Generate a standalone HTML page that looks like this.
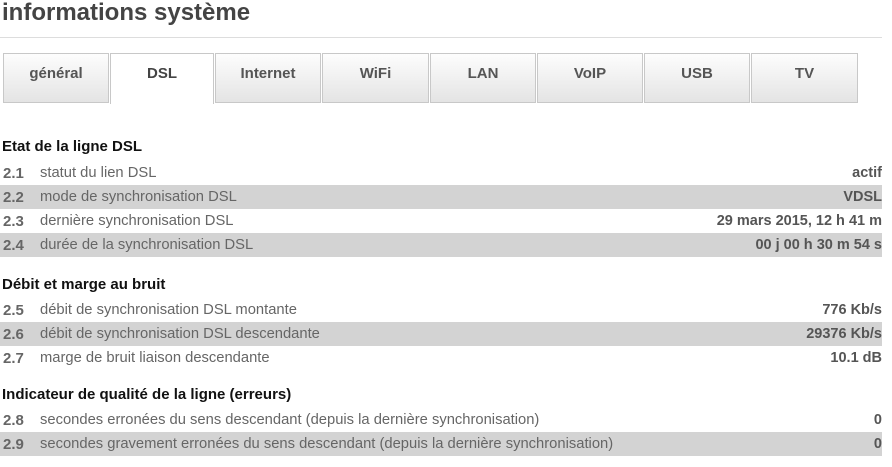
<!DOCTYPE html>
<html><head><meta charset="utf-8"><style>
body{margin:0;width:892px;height:467px;background:#fff;font-family:"Liberation Sans",sans-serif;position:relative;overflow:hidden}
.t{position:absolute;left:2px;top:-1px;font-size:24px;font-weight:bold;color:#444}
.hr{position:absolute;left:0;top:37px;width:882px;height:1px;background:#ddd}
.tab{position:absolute;top:53px;border:1px solid #c8c8c8;background:linear-gradient(#fdfdfd,#e4e4e4);font-size:15px;font-weight:bold;color:#555;text-align:center;line-height:40px;box-sizing:border-box;height:50px}
.tab.a{background:#fff;border-bottom:none;height:51px;color:#444}
.h{position:absolute;left:2px;font-size:15px;font-weight:bold;color:#111}
.r{position:absolute;left:0;width:882px;height:24px;line-height:24px;font-size:14.75px}
.r.g{background:#d3d3d3}
.n{position:absolute;left:3px;top:1px;font-weight:bold;color:#666;font-size:15px}
.l{position:absolute;left:40px;top:0;color:#666}
.v{position:absolute;right:0;top:0;font-weight:bold;color:#555;font-size:14.5px}
</style></head><body>
<div class="t">informations système</div>
<div class="hr"></div>
<div class="tab" style="left:3px;width:106px">général</div>
<div class="tab a" style="left:110px;width:104px">DSL</div>
<div class="tab" style="left:215px;width:106px">Internet</div>
<div class="tab" style="left:322px;width:107px">WiFi</div>
<div class="tab" style="left:430px;width:106px">LAN</div>
<div class="tab" style="left:537px;width:106px">VoIP</div>
<div class="tab" style="left:644px;width:106px">USB</div>
<div class="tab" style="left:751px;width:107px">TV</div>

<div class="h" style="top:138px">Etat de la ligne DSL</div>
<div class="r" style="top:161px"><span class="n">2.1</span><span class="l">statut du lien DSL</span><span class="v">actif</span></div>
<div class="r g" style="top:185px"><span class="n">2.2</span><span class="l">mode de synchronisation DSL</span><span class="v">VDSL</span></div>
<div class="r" style="top:209px"><span class="n">2.3</span><span class="l">dernière synchronisation DSL</span><span class="v">29 mars 2015, 12 h 41 m</span></div>
<div class="r g" style="top:233px"><span class="n">2.4</span><span class="l">durée de la synchronisation DSL</span><span class="v">00 j 00 h 30 m 54 s</span></div>

<div class="h" style="top:276px">Débit et marge au bruit</div>
<div class="r" style="top:298px"><span class="n">2.5</span><span class="l">débit de synchronisation DSL montante</span><span class="v">776 Kb/s</span></div>
<div class="r g" style="top:322px"><span class="n">2.6</span><span class="l">débit de synchronisation DSL descendante</span><span class="v">29376 Kb/s</span></div>
<div class="r" style="top:346px"><span class="n">2.7</span><span class="l">marge de bruit liaison descendante</span><span class="v">10.1 dB</span></div>

<div class="h" style="top:386px">Indicateur de qualité de la ligne (erreurs)</div>
<div class="r" style="top:408px"><span class="n">2.8</span><span class="l">secondes erronées du sens descendant (depuis la dernière synchronisation)</span><span class="v">0</span></div>
<div class="r g" style="top:432px"><span class="n">2.9</span><span class="l">secondes gravement erronées du sens descendant (depuis la dernière synchronisation)</span><span class="v">0</span></div>
</body></html>
